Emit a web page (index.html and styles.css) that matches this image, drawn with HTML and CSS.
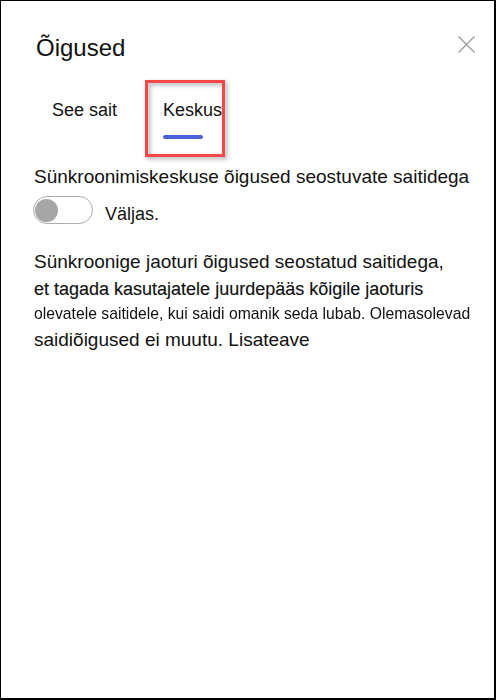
FILE: index.html
```html
<!DOCTYPE html>
<html lang="et">
<head>
<meta charset="utf-8">
<title>Õigused</title>
<link rel="stylesheet" href="styles.css">
</head>
<body>
<div class="panel">
  <div class="header">
    <h1 class="title">Õigused</h1>
    <svg class="close" width="17" height="17" viewBox="0 0 17 17" aria-label="Sulge">
      <path d="M0.5 0.5 L16.5 16.5 M16.5 0.5 L0.5 16.5" stroke="#9a9a9a" stroke-width="1.3" fill="none"/>
    </svg>
  </div>
  <div class="tabs">
    <div class="tab tab-first">See sait</div>
    <div class="tab tab-active">
      <span class="tab-label">Keskus</span>
      <div class="tab-underline"></div>
      <div class="highlight"></div>
    </div>
  </div>
  <div class="setting-title">Sünkroonimiskeskuse õigused seostuvate saitidega</div>
  <div class="toggle-row">
    <div class="toggle"><div class="knob"></div></div>
    <span class="toggle-label">Väljas.</span>
  </div>
  <div class="desc">
    <div class="line l1">Sünkroonige jaoturi õigused seostatud saitidega,</div>
    <div class="line l2">et tagada kasutajatele juurdepääs kõigile jaoturis</div>
    <div class="line l3">olevatele saitidele, kui saidi omanik seda lubab. Olemasolevad</div>
    <div class="line l4">saidiõigused ei muutu. Lisateave</div>
  </div>
</div>
</body>
</html>
```

FILE: styles.css
```css
html, body {
  margin: 0;
  padding: 0;
  background: #fff;
}

body {
  font-family: "Liberation Sans", Arial, sans-serif;
  color: #111;
}

.panel {
  position: relative;
  width: 496px;
  height: 700px;
  box-sizing: border-box;
  border-style: solid;
  border-color: #000;
  border-width: 1px 2px 2px 1px;
  padding: 0 19px 0 33px;
  background: #fff;
}

.header {
  display: flex;
  justify-content: space-between;
  align-items: flex-start;
  margin-top: 31px;
}

.title {
  margin: 0 0 0 2px;
  font-size: 24px;
  line-height: 32px;
  font-weight: normal;
  color: #111;
}

.close {
  display: block;
  margin-top: 4px;
}

.tabs {
  display: flex;
  align-items: flex-start;
  margin-top: 34px;
}

.tab {
  font-size: 18px;
  line-height: 24px;
  color: #111;
}

.tab-first {
  margin-left: 18px;
}

.tab-active {
  position: relative;
  margin-left: 46px;
}

.tab-label {
  display: block;
}

.tab-underline {
  width: 40px;
  height: 4px;
  margin-top: 13px;
  border-radius: 2px;
  background: #4a62d6;
}

.highlight {
  position: absolute;
  left: -18px;
  top: -18px;
  width: 80px;
  height: 77px;
  box-sizing: border-box;
  border: 3px solid #f24848;
  filter: drop-shadow(2px 2px 2px rgba(0, 0, 0, 0.35));
}

.setting-title {
  margin-top: 26px;
  font-size: 19px;
  line-height: 24px;
}

.toggle-row {
  display: flex;
  align-items: flex-start;
  margin-top: 7px;
}

.toggle {
  display: flex;
  align-items: center;
  width: 60px;
  height: 28px;
  margin-left: -1px;
  box-sizing: border-box;
  border: 1px solid #adadad;
  border-radius: 14px;
  background: #fff;
}

.knob {
  width: 23px;
  height: 23px;
  margin-left: 1px;
  border-radius: 50%;
  background: #a6a6a6;
}

.toggle-label {
  margin-left: 12px;
  margin-top: 6px;
  font-size: 18px;
  line-height: 24px;
}

.desc {
  margin-top: 24px;
}

.line {
  white-space: nowrap;
}

.l1 {
  font-size: 19px;
  line-height: 24px;
}

.l2 {
  margin-top: 3px;
  font-size: 18px;
  line-height: 24px;
  -webkit-text-stroke: 0.15px #111;
}

.l3 {
  margin-top: 3px;
  font-size: 17px;
  line-height: 20px;
  transform: scaleX(0.925);
  transform-origin: left center;
}

.l4 {
  margin-top: 4px;
  font-size: 19px;
  line-height: 24px;
}
```
